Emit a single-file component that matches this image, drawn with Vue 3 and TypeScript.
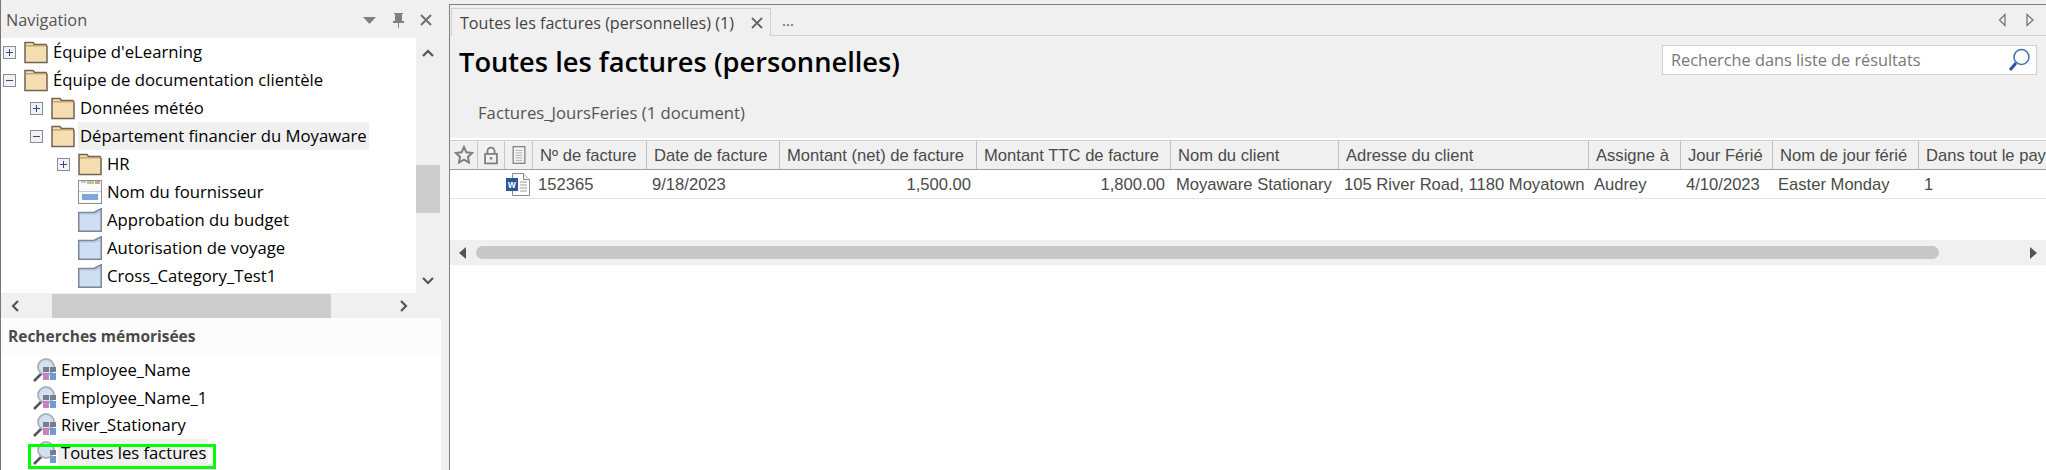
<script setup lang="ts">
type Kind = 'folder' | 'form' | 'category'
interface TreeRow {
  label: string
  level: number
  kind: Kind
  toggle?: '+' | '-'
  hover?: boolean
}

const treeRows: TreeRow[] = [
  { label: "Équipe d'eLearning", level: 0, kind: 'folder', toggle: '+' },
  { label: 'Équipe de documentation clientèle', level: 0, kind: 'folder', toggle: '-' },
  { label: 'Données météo', level: 1, kind: 'folder', toggle: '+' },
  { label: 'Département financier du Moyaware', level: 1, kind: 'folder', toggle: '-', hover: true },
  { label: 'HR', level: 2, kind: 'folder', toggle: '+' },
  { label: 'Nom du fournisseur', level: 2, kind: 'form' },
  { label: 'Approbation du budget', level: 2, kind: 'category' },
  { label: 'Autorisation de voyage', level: 2, kind: 'category' },
  { label: 'Cross_Category_Test1', level: 2, kind: 'category' }
]

const searches = ['Employee_Name', 'Employee_Name_1', 'River_Stationary', 'Toutes les factures']

const columns = [
  { title: 'Nº de facture', value: '152365', width: 114 },
  { title: 'Date de facture', value: '9/18/2023', width: 133 },
  { title: 'Montant (net) de facture', value: '1,500.00', width: 197, right: true },
  { title: 'Montant TTC de facture', value: '1,800.00', width: 194, right: true },
  { title: 'Nom du client', value: 'Moyaware Stationary', width: 168 },
  { title: 'Adresse du client', value: '105 River Road, 1180 Moyatown', width: 250 },
  { title: 'Assigne à', value: 'Audrey', width: 92 },
  { title: 'Jour Férié', value: '4/10/2023', width: 92 },
  { title: 'Nom de jour férié', value: 'Easter Monday', width: 146 },
  { title: 'Dans tout le pays', value: '1', width: 130 }
]
</script>

<template>
  <div class="app">
    <aside class="nav">
      <header class="nav-head">
        <span class="nav-title">Navigation</span>
        <svg class="nav-tools" width="74" height="20" viewBox="0 0 74 20">
          <path d="M0 7h13l-6.500 7z" fill="#808080" />
          <path d="M31 3h9v1h-1v7h2v2h-5v5h-1v-5h-5v-2h2V4h-1z" fill="#808080" />
          <path d="M58 5l10 10M68 5L58 15" stroke="#707070" stroke-width="2" fill="none" />
        </svg>
      </header>

      <div class="tree-wrap">
        <ul class="tree">
          <li v-for="row in treeRows" :key="row.label" class="tree-row" :class="`lvl-${row.level}`">
            <span class="toggle">
              <svg v-if="row.toggle" width="13" height="13" viewBox="0 0 13 13">
                <rect x="0.500" y="0.500" width="12" height="12" fill="#f2f2f4" stroke="#8c8c94" />
                <path d="M3 6.500h7" stroke="#2d4a8c" fill="none" />
                <path v-if="row.toggle === '+'" d="M6.500 3v7" stroke="#2d4a8c" fill="none" />
              </svg>
            </span>
            <svg v-if="row.kind === 'folder'" class="tree-icon" width="24" height="24" viewBox="0 0 24 24">
              <path d="M1 22.500V2.500h8l1.500 2H22l1 2v16z" fill="#f4deb2" stroke="#6f6355" stroke-width="1.500" />
              <path d="M2 5h20v1.500H2z" fill="#c9a56f" />
            </svg>
            <svg v-else-if="row.kind === 'form'" class="tree-icon" width="24" height="24" viewBox="0 0 24 24">
              <rect x="0.500" y="0.500" width="23" height="23" fill="#fbfbfb" stroke="#8a8f98" />
              <path d="M3 1h5v2H3z" fill="#c7c7c7" />
              <path d="M9 1h7v3H9z" fill="#b7cc84" />
              <path d="M17 1h5v3h-5z" fill="#d99a9a" />
              <path d="M1 11h22v1H1z" fill="#c5cbd4" />
              <rect x="4" y="14" width="16" height="6" fill="#80a6da" />
            </svg>
            <svg v-else class="tree-icon" width="24" height="24" viewBox="0 0 24 24">
              <path d="M0.750 23.250V4.500h15L23.250 0.750v22.500z" fill="#cfdef2" stroke="#7b8698" stroke-width="1.500" />
              <path d="M2 5.500h14.500L22 3v1.500L17 6.500H2z" fill="#a9bedd" />
            </svg>
            <span class="tree-label" :class="{ hover: row.hover }">{{ row.label }}</span>
          </li>
        </ul>
        <div class="vbar">
          <svg width="24" height="16" viewBox="0 0 24 16">
            <path d="M7 11l5-5 5 5" stroke="#555" stroke-width="2.200" fill="none" />
          </svg>
          <div class="vtrack"><div class="vthumb" /></div>
          <svg width="24" height="16" viewBox="0 0 24 16">
            <path d="M7 5l5 5 5-5" stroke="#555" stroke-width="2.200" fill="none" />
          </svg>
        </div>
      </div>

      <div class="hbar">
        <svg width="24" height="24" viewBox="0 0 24 24">
          <path d="M17 7l-5 5 5 5" stroke="#555" stroke-width="2.200" fill="none" />
        </svg>
        <div class="htrack"><div class="hthumb" /></div>
        <svg width="24" height="24" viewBox="0 0 24 24">
          <path d="M9 7l5 5-5 5" stroke="#555" stroke-width="2.200" fill="none" />
        </svg>
      </div>

      <section class="saved">
        <h3 class="saved-title">Recherches mémorisées</h3>
        <ul class="saved-list">
          <li v-for="(name, i) in searches" :key="name" class="saved-row">
            <svg width="25" height="26" viewBox="0 0 25 26">
              <path d="M2 24l8-8" stroke="#555" stroke-width="2.500" fill="none" />
              <circle cx="14" cy="10" r="8" fill="#d3e0f1" stroke="#aab0b8" stroke-width="1.800" />
              <template v-if="i < 3">
                <rect x="11" y="10" width="6" height="5" fill="#777d8a" />
                <rect x="18" y="10" width="6" height="5" fill="#777d8a" />
                <rect x="11" y="16" width="6" height="7" fill="#c483bd" />
              </template>
              <rect v-else x="18" y="10" width="6" height="5" fill="#777d8a" />
              <rect x="18" y="16" width="6" height="7" fill="#6f9bd4" />
            </svg>
            <span class="saved-label" :class="{ current: i === 3 }">{{ name }}</span>
          </li>
        </ul>
        <div class="focus-box" />
      </section>
    </aside>

    <main class="main">
      <div class="tabs">
        <div class="tab">
          <span>Toutes les factures (personnelles) (1)</span>
          <svg width="12" height="12" viewBox="0 0 12 12">
            <path d="M1 1l10 10M11 1L1 11" stroke="#666" stroke-width="1.800" fill="none" />
          </svg>
        </div>
        <span class="more">...</span>
        <svg class="tab-arrows" width="36" height="14" viewBox="0 0 36 14">
          <path d="M7 1.500L1.500 7 7 12.500z" fill="#f0f0f0" stroke="#777" stroke-width="1.300" />
          <path d="M29 1.500L35 7l-6 5.500z" fill="#f0f0f0" stroke="#777" stroke-width="1.300" />
        </svg>
      </div>

      <div class="title-row">
        <h1 class="page-title">Toutes les factures (personnelles)</h1>
        <div class="search">
          <span>Recherche dans liste de résultats</span>
          <svg width="24" height="24" viewBox="0 0 24 24">
            <circle cx="14.500" cy="9" r="7.500" fill="none" stroke="#3f74b5" stroke-width="1.600" />
            <path d="M3 22l6-7" stroke="#27589c" stroke-width="3" fill="none" />
          </svg>
        </div>
      </div>

      <div class="group">Factures_JoursFeries (1 document)</div>

      <div class="grid">
        <div class="grid-head">
          <div class="icon-col w28">
            <svg width="20" height="20" viewBox="0 0 24 24">
              <path d="M12 2.500l2.900 6.300 6.800.8-5 4.700 1.300 6.800-6-3.400-6 3.400 1.300-6.800-5-4.700 6.800-.8z" fill="none" stroke="#7d7d7d" stroke-width="2.400" />
            </svg>
          </div>
          <div class="icon-col w27">
            <svg width="16" height="19" viewBox="0 0 20 24">
              <path d="M5.500 10V6.500a4.500 4.500 0 0 1 9 0V10" fill="none" stroke="#7d7d7d" stroke-width="2.200" />
              <rect x="2.500" y="10" width="15" height="12" fill="none" stroke="#7d7d7d" stroke-width="2.200" />
              <rect x="8.500" y="14" width="3" height="3" fill="#7d7d7d" />
            </svg>
          </div>
          <div class="icon-col w28">
            <svg width="14" height="20" viewBox="0 0 16 24">
              <rect x="1" y="2" width="14" height="20" fill="#f4f4f4" stroke="#858585" stroke-width="1.600" />
              <path d="M4 6.500h8M4 9.500h8M4 12.500h8M4 15.500h8M4 18.500h8" stroke="#a2a2a2" fill="none" />
            </svg>
          </div>
          <div
            v-for="col in columns"
            :key="col.title"
            class="head-cell"
            :style="{ width: col.width + 'px' }"
          >{{ col.title }}</div>
        </div>

        <div class="grid-row">
          <div class="doc-cell">
            <svg width="24" height="23" viewBox="0 0 24 23">
              <path d="M6.500 0.500h11l6 6v16h-17z" fill="#fff" stroke="#8c8c8c" />
              <path d="M17.500 0.500v6h6" fill="#eee" stroke="#8c8c8c" />
              <path d="M14 9h7M14 12h7M14 15h7M14 18h7" stroke="#9a9a9a" fill="none" />
              <rect x="0" y="5" width="12" height="13" fill="#2b579a" />
              <text x="6" y="15" class="word-w">w</text>
            </svg>
          </div>
          <div
            v-for="col in columns"
            :key="col.title"
            class="cell"
            :class="{ right: col.right }"
            :style="{ width: col.width + 'px' }"
          >{{ col.value }}</div>
        </div>

        <div class="grid-empty" />

        <div class="grid-scroll">
          <svg width="16" height="16" viewBox="0 0 16 16"><path d="M11 2v12L4 8z" fill="#555" /></svg>
          <div class="grid-track"><div class="grid-thumb" /></div>
          <svg width="16" height="16" viewBox="0 0 16 16"><path d="M5 2v12l7-6z" fill="#555" /></svg>
        </div>

        <div class="grid-rest" />
      </div>
    </main>
  </div>
</template>

<style>
html,
body {
  margin: 0;
  background: #f0f0f0;
}
</style>

<style scoped>
.app {
  display: flex;
  width: 2046px;
  height: 470px;
  overflow: hidden;
  background: #f0f0f0;
  font-family: "Open Sans", "Noto Sans", sans-serif;
  color: #000;
}

.nav {
  display: flex;
  flex-direction: column;
  flex: none;
  width: 440px;
  margin-right: 8px;
  border-left: 1px solid #777;
}

.nav-head {
  display: flex;
  align-items: center;
  justify-content: space-between;
  height: 38px;
  padding: 2px 0 0 5px;
  box-sizing: border-box;
}

.nav-title {
  font-size: 16.300px;
  color: #555;
}

.nav-tools {
  margin-right: 4px;
  margin-top: -1px;
}

.tree-wrap {
  display: flex;
  height: 255px;
}

.tree {
  width: 415px;
  margin: 0;
  padding: 0;
  list-style: none;
  background: #fff;
  box-sizing: border-box;
}

.tree-row {
  display: flex;
  align-items: center;
  height: 28px;
  font-size: 16.700px;
}

.lvl-0 { padding-left: 2px; }
.lvl-1 { padding-left: 29px; }
.lvl-2 { padding-left: 56px; }

.toggle {
  display: flex;
  width: 13px;
  height: 13px;
  margin-right: 8px;
}

.tree-icon {
  flex: none;
}

.tree-label {
  margin-left: 3px;
  padding: 0 2px;
  line-height: 28px;
  white-space: nowrap;
}

.tree-label.hover {
  background: #f0f0f0;
}

.vbar {
  display: flex;
  flex-direction: column;
  justify-content: space-between;
  width: 24px;
  padding: 7px 0 4px;
  box-sizing: border-box;
}

.vtrack {
  flex: 1;
}

.vthumb {
  width: 24px;
  height: 48px;
  margin-top: 104px;
  background: #cdcdcd;
}

.hbar {
  display: flex;
  align-items: center;
  width: 415px;
  height: 25px;
}

.htrack {
  flex: 1;
  height: 24px;
}

.hthumb {
  width: 279px;
  height: 24px;
  margin-left: 27px;
  background: #cdcdcd;
}

.saved {
  position: relative;
  flex: 1;
  background: #fff;
}

.saved-title {
  height: 38px;
  margin: 0;
  padding-left: 7px;
  background: #fcfcfc;
  font-size: 15.500px;
  font-weight: 700;
  line-height: 37px;
  color: #4a4a4a;
}

.saved-list {
  margin: 0;
  padding: 0 0 0 31px;
  list-style: none;
}

.saved-row {
  display: flex;
  align-items: center;
  height: 27.700px;
  font-size: 16.600px;
}

.saved-label {
  margin-left: 1px;
  padding: 0 2px 0 3px;
  line-height: 28px;
}

.saved-label.current {
  background: #f0f0f0;
}

.focus-box {
  position: absolute;
  left: 27px;
  top: 126px;
  width: 182px;
  height: 19px;
  border: 3px solid #00ff00;
}

.main {
  display: flex;
  flex-direction: column;
  flex: 1;
  min-width: 0;
  margin-top: 4px;
  border-top: 1px solid #808080;
  border-left: 1px solid #808080;
}

.tabs {
  display: flex;
  align-items: center;
  height: 31px;
  border-bottom: 1px solid #d0d0d0;
  box-sizing: border-box;
}

.tab {
  display: flex;
  align-items: center;
  justify-content: space-between;
  width: 320px;
  height: 28px;
  margin: 3px 0 -1px 1px;
  padding: 0 7px 0 8px;
  box-sizing: border-box;
  border: 1px solid #d0d0d0;
  border-bottom: 0;
  background: #f0f0f0;
  font-size: 16.100px;
  color: #444;
}

.more {
  margin-left: 11px;
  font-size: 15px;
  color: #555;
}

.tab-arrows {
  margin-left: auto;
  margin-right: 12px;
}

.title-row {
  display: flex;
  align-items: center;
  justify-content: space-between;
  height: 38px;
  margin-top: 7px;
  padding: 0 9px;
}

.page-title {
  margin: 0;
  font-size: 27.250px;
  font-weight: 600;
  line-height: 38px;
}

.search {
  display: flex;
  align-items: center;
  justify-content: space-between;
  width: 375px;
  height: 30px;
  margin-top: -4px;
  padding: 0 5px 0 8px;
  box-sizing: border-box;
  border: 1px solid #cfcfcf;
  background: #fff;
  font-size: 16.300px;
  color: #777;
}

.group {
  height: 36px;
  margin-top: 21px;
  padding-left: 28px;
  font-size: 16.700px;
  line-height: 21px;
  color: #555;
}

.grid {
  display: flex;
  flex-direction: column;
  flex: 1;
  min-height: 0;
  border-top: 2px solid #fff;
  font-family: "Liberation Sans", Arial, sans-serif;
  font-size: 16.600px;
  color: #4a4a4a;
}

.grid-head {
  display: flex;
  height: 30px;
  border-top: 1px solid #cfcfcf;
  border-bottom: 1px solid #a0a0a0;
  box-sizing: border-box;
}

.icon-col {
  display: flex;
  align-items: center;
  justify-content: center;
  flex: none;
  box-sizing: border-box;
  border-right: 1px solid #c8c8c8;
}

.icon-col.w27 { width: 27px; }
.icon-col.w28 { width: 28px; }

.head-cell {
  flex: none;
  padding-left: 7px;
  box-sizing: border-box;
  border-right: 1px solid #c0c0c0;
  line-height: 30px;
  white-space: nowrap;
  overflow: hidden;
}

.grid-row {
  display: flex;
  height: 29px;
  background: #fff;
  border-bottom: 1px solid #e4e4e4;
  box-sizing: border-box;
}

.doc-cell {
  display: flex;
  align-items: center;
  justify-content: flex-end;
  flex: none;
  width: 83px;
  padding-right: 3px;
  box-sizing: border-box;
}

.word-w {
  font-family: "Liberation Sans", sans-serif;
  font-size: 10px;
  font-weight: 700;
  fill: #fff;
  text-anchor: middle;
}

.cell {
  flex: none;
  padding-left: 5px;
  box-sizing: border-box;
  line-height: 29px;
  white-space: nowrap;
}

.cell.right {
  padding-right: 6px;
  text-align: right;
}

.grid-empty {
  height: 41px;
  background: #fff;
}

.grid-scroll {
  display: flex;
  align-items: center;
  height: 25px;
  padding: 0 5px;
}

.grid-track {
  flex: 1;
  padding: 0 86px 0 5px;
}

.grid-thumb {
  height: 13px;
  border-radius: 7px;
  background: #c8c8c8;
}

.grid-rest {
  flex: 1;
  background: #fff;
}
</style>
